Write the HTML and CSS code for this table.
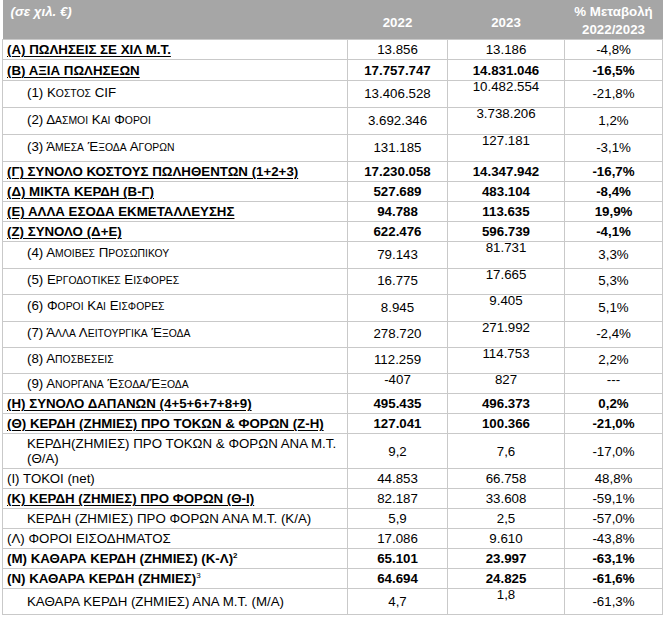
FILE: index.html
```html
<!DOCTYPE html>
<html lang="el">
<head>
<meta charset="utf-8">
<title>Αποτελέσματα</title>
<link rel="stylesheet" href="styles.css">
</head>
<body>
<table class="fin">
  <colgroup>
    <col class="c-label"><col class="c-y1"><col class="c-y2"><col class="c-pct">
  </colgroup>
  <thead>
    <tr class="head">
      <th class="h-unit">(σε χιλ. €)</th>
      <th class="h-year">2022</th>
      <th class="h-year">2023</th>
      <th class="h-pct">% Μεταβολή<br>2022/2023</th>
    </tr>
  </thead>
  <tbody>
    <tr class="r"><td class="lbl key">(Α) ΠΩΛΗΣΕΙΣ ΣΕ ΧΙΛ Μ.Τ.</td><td>13.856</td><td>13.186</td><td>-4,8%</td></tr>
    <tr class="r b h21"><td class="lbl key">(Β) ΑΞΙΑ ΠΩΛΗΣΕΩΝ</td><td>17.757.747</td><td>14.831.046</td><td>-16,5%</td></tr>
    <tr class="r t h27"><td class="lbl sub">(1) Κ<span class="s">οστος</span> CIF</td><td>13.406.528</td><td class="up">10.482.554</td><td>-21,8%</td></tr>
    <tr class="r t h27"><td class="lbl sub">(2) Δ<span class="s">ασμοι</span> Κ<span class="s">αι</span> Φ<span class="s">οροι</span></td><td>3.692.346</td><td class="up">3.738.206</td><td>1,2%</td></tr>
    <tr class="r t h27"><td class="lbl sub">(3) Ά<span class="s">μεσα</span> Έ<span class="s">ξοδα</span> Α<span class="s">γορων</span></td><td>131.185</td><td class="up">127.181</td><td>-3,1%</td></tr>
    <tr class="r b"><td class="lbl key">(Γ) ΣΥΝΟΛΟ ΚΟΣΤΟΥΣ ΠΩΛΗΘΕΝΤΩΝ (1+2+3)</td><td>17.230.058</td><td>14.347.942</td><td>-16,7%</td></tr>
    <tr class="r b"><td class="lbl key">(Δ) ΜΙΚΤΑ ΚΕΡΔΗ (Β-Γ)</td><td>527.689</td><td>483.104</td><td>-8,4%</td></tr>
    <tr class="r b"><td class="lbl key">(Ε) ΑΛΛΑ ΕΣΟΔΑ ΕΚΜΕΤΑΛΛΕΥΣΗΣ</td><td>94.788</td><td>113.635</td><td>19,9%</td></tr>
    <tr class="r b"><td class="lbl key">(Ζ) ΣΥΝΟΛΟ (Δ+Ε)</td><td>622.476</td><td>596.739</td><td>-4,1%</td></tr>
    <tr class="r t h27 tight"><td class="lbl sub">(4) Α<span class="s">μοιβες</span> Π<span class="s">ροσωπικου</span></td><td>79.143</td><td class="up">81.731</td><td>3,3%</td></tr>
    <tr class="r t h26 tight"><td class="lbl sub">(5) Ε<span class="s">ργοδοτικες</span> Ε<span class="s">ισφορες</span></td><td>16.775</td><td class="up">17.665</td><td>5,3%</td></tr>
    <tr class="r t h27 tight"><td class="lbl sub">(6) Φ<span class="s">οροι</span> Κ<span class="s">αι</span> Ε<span class="s">ισφορες</span></td><td>8.945</td><td class="up">9.405</td><td>5,1%</td></tr>
    <tr class="r t h26 tight"><td class="lbl sub">(7) Ά<span class="s">λλα</span> Λ<span class="s">ειτουργικα</span> Έ<span class="s">ξοδα</span></td><td>278.720</td><td class="up">271.992</td><td>-2,4%</td></tr>
    <tr class="r t h26 tight"><td class="lbl sub">(8) Α<span class="s">ποσβεσεις</span></td><td>112.259</td><td class="up">114.753</td><td>2,2%</td></tr>
    <tr class="r lowlbl"><td class="lbl sub">(9) Α<span class="s">νοργανα</span> Έ<span class="s">σοδα</span>/Έ<span class="s">ξοδα</span></td><td class="up">-407</td><td class="up">827</td><td class="up">---</td></tr>
    <tr class="r b"><td class="lbl key">(Η) ΣΥΝΟΛΟ ΔΑΠΑΝΩΝ (4+5+6+7+8+9)</td><td>495.435</td><td>496.373</td><td>0,2%</td></tr>
    <tr class="r b"><td class="lbl key">(Θ) ΚΕΡΔΗ (ΖΗΜΙΕΣ) ΠΡΟ ΤΟΚΩΝ &amp; ΦΟΡΩΝ (Ζ-Η)</td><td>127.041</td><td>100.366</td><td>-21,0%</td></tr>
    <tr class="r dbl"><td class="lbl sub">ΚΕΡΔΗ(ΖΗΜΙΕΣ) ΠΡΟ ΤΟΚΩΝ &amp; ΦΟΡΩΝ ΑΝΑ Μ.Τ.<br>(Θ/Α)</td><td>9,2</td><td>7,6</td><td>-17,0%</td></tr>
    <tr class="r"><td class="lbl">(Ι) ΤΟΚΟΙ (net)</td><td>44.853</td><td>66.758</td><td>48,8%</td></tr>
    <tr class="r"><td class="lbl key">(Κ) ΚΕΡΔΗ (ΖΗΜΙΕΣ) ΠΡΟ ΦΟΡΩΝ (Θ-Ι)</td><td>82.187</td><td>33.608</td><td>-59,1%</td></tr>
    <tr class="r"><td class="lbl sub">ΚΕΡΔΗ (ΖΗΜΙΕΣ) ΠΡΟ ΦΟΡΩΝ ΑΝΑ Μ.Τ. (Κ/Α)</td><td>5,9</td><td>2,5</td><td>-57,0%</td></tr>
    <tr class="r"><td class="lbl">(Λ) ΦΟΡΟΙ ΕΙΣΟΔΗΜΑΤΟΣ</td><td>17.086</td><td>9.610</td><td>-43,8%</td></tr>
    <tr class="r b"><td class="lbl">(Μ) ΚΑΘΑΡΑ ΚΕΡΔΗ (ΖΗΜΙΕΣ) (Κ-Λ)<sup>2</sup></td><td>65.101</td><td>23.997</td><td>-63,1%</td></tr>
    <tr class="r b"><td class="lbl">(Ν) ΚΑΘΑΡΑ ΚΕΡΔΗ (ΖΗΜΙΕΣ)<sup class="thin">3</sup></td><td>64.694</td><td>24.825</td><td>-61,6%</td></tr>
    <tr class="r last"><td class="lbl sub">ΚΑΘΑΡΑ ΚΕΡΔΗ (ΖΗΜΙΕΣ) ΑΝΑ Μ.Τ. (Μ/Α)</td><td>4,7</td><td class="up">1,8</td><td>-61,3%</td></tr>
  </tbody>
</table>
</body>
</html>
```

FILE: styles.css
```css
html, body {
  margin: 0;
  padding: 0;
  background: #ffffff;
}

body {
  padding: 0 0 0 2px;
  font-family: "Liberation Sans", Arial, sans-serif;
  font-size: 13.3px;
  color: #000000;
}

.fin {
  border-collapse: collapse;
  table-layout: fixed;
  width: 660px;
}

.c-label { width: 345px; }
.c-y1 { width: 100px; }
.c-y2 { width: 117px; }
.c-pct { width: 98px; }

.head {
  height: 39px;
}

.head th {
  background: #a6a6a6;
  color: #ffffff;
  font-weight: bold;
  padding: 0;
  border: none;
  line-height: 15px;
}

.head .h-unit {
  text-align: left;
  vertical-align: top;
  font-style: italic;
  padding: 4px 0 0 8px;
}

.head .h-year {
  text-align: center;
  vertical-align: bottom;
  padding-bottom: 9px;
}

.head .h-pct {
  text-align: center;
  vertical-align: top;
  line-height: 18px;
  padding-top: 3px;
}

/* rows */
.r { height: 20px; }
.r.h21 { height: 21px; }
.r.h27 { height: 27px; }
.r.h26 { height: 26px; }
.r.last { height: 26px; }
.r.dbl { height: 35px; }

.fin td {
  border: 1px solid #c9c9c9;
  padding: 0 4px;
  line-height: 15px;
  text-align: center;
  vertical-align: middle;
  white-space: nowrap;
}

.fin td.lbl {
  text-align: left;
}

/* tall sub-item rows: figures sit low, 2023 sits at the top */
.r.t td {
  vertical-align: bottom;
  padding-bottom: 6px;
}

.r.t td.lbl {
  vertical-align: top;
  padding-top: 4px;
  padding-bottom: 0;
}

.r.t.tight td.lbl {
  padding-top: 3px;
}

.r.last td {
  vertical-align: top;
  padding-top: 5px;
}

.fin td.up {
  vertical-align: top;
  padding-top: 0;
  padding-bottom: 0;
  line-height: 12px;
}

.r.lowlbl td.lbl {
  vertical-align: bottom;
  padding-bottom: 1px;
}

.r.b td {
  font-weight: bold;
}

.key {
  font-weight: bold;
  text-decoration: underline;
  text-decoration-thickness: 1px;
  text-underline-offset: 2px;
}

.fin td.sub {
  padding-left: 24px;
}

.s {
  text-transform: uppercase;
  font-size: 10.4px;
}

sup {
  font-size: 8px;
  line-height: 0;
  vertical-align: 5px;
}

sup.thin {
  font-weight: normal;
}
```
